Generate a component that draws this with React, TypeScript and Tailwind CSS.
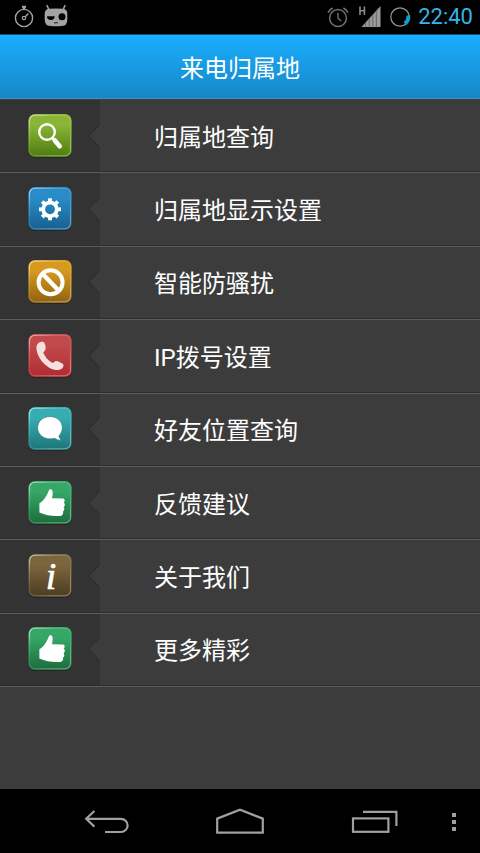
import type { ReactNode } from 'react';

const menuItems: { label: string; icon: ReactNode }[] = [
  { label: '归属地查询', icon: <SearchIcon /> },
  { label: '归属地显示设置', icon: <SettingsIcon /> },
  { label: '智能防骚扰', icon: <BlockIcon /> },
  { label: 'IP拨号设置', icon: <PhoneIcon /> },
  { label: '好友位置查询', icon: <ChatIcon /> },
  { label: '反馈建议', icon: <ThumbIcon id="feedback" /> },
  { label: '关于我们', icon: <InfoIcon /> },
  { label: '更多精彩', icon: <ThumbIcon id="more" /> },
];

type TileProps = { id: string; from: string; to: string; children: ReactNode };

// Glossy rounded tile shared by all the menu icons
function Tile({ id, from, to, children }: TileProps) {
  return (
    <svg width="44" height="44" viewBox="0 0 44 44" aria-hidden="true">
      <defs>
        <linearGradient id={`${id}-fill`} x1="0" y1="0" x2="0" y2="1">
          <stop offset="0.25" stopColor={from} />
          <stop offset="1" stopColor={to} />
        </linearGradient>
        <linearGradient id={`${id}-rim`} x1="0" y1="0" x2="0.6" y2="1">
          <stop offset="0" stopColor="#fff" stopOpacity="0.7" />
          <stop offset="0.25" stopColor="#fff" stopOpacity="0.25" />
          <stop offset="0.6" stopColor="#fff" stopOpacity="0.08" />
          <stop offset="1" stopColor="#fff" stopOpacity="0.35" />
        </linearGradient>
      </defs>
      <rect x="0" y="0.5" width="44" height="43.5" rx="7" fill="#222" fillOpacity="0.7" />
      <rect x="0.3" y="0" width="43.4" height="43" rx="6.5" fill={`url(#${id}-fill)`} />
      <rect x="1.5" y="1.2" width="41" height="40.6" rx="5.6" fill="none" stroke={`url(#${id}-rim)`} strokeWidth="1.1" />
      {children}
    </svg>
  );
}

function SearchIcon() {
  return (
    <Tile id="search" from="#8ab536" to="#4d7c10">
      <circle cx="19" cy="18" r="7.8" fill="none" stroke="#fff" strokeWidth="2.4" />
      <path d="M24 23.5 L26.5 26" stroke="#fff" strokeWidth="3" />
      <path d="M26.8 26.5 L31.7 32.2" stroke="#fff" strokeWidth="4.6" strokeLinecap="round" />
    </Tile>
  );
}

function SettingsIcon() {
  const teeth = [0, 45, 90, 135, 180, 225, 270, 315];
  return (
    <Tile id="settings" from="#2a8cc8" to="#185f8e">
      <circle cx="22" cy="22.3" r="6.8" fill="none" stroke="#fff" strokeWidth="3.8" />
      {teeth.map((angle) => (
        <rect key={angle} x="20.1" y="11.3" width="3.8" height="4" fill="#fff" transform={`rotate(${angle} 22 22.3)`} />
      ))}
    </Tile>
  );
}

function BlockIcon() {
  return (
    <Tile id="block" from="#d69a20" to="#8f6210">
      <circle cx="22.6" cy="22.3" r="12" fill="none" stroke="#fff" strokeWidth="4" />
      <path d="M14.5 13.8 L30.8 30.8" stroke="#fff" strokeWidth="4.4" />
    </Tile>
  );
}

function PhoneIcon() {
  return (
    <Tile id="phone" from="#c24a4c" to="#b02c30">
      <path
        d="M13.2 7.8 C15.4 7.2 16.7 8.3 17.2 11 C17.8 14 18 15.4 16.6 16.9 L15.2 18.5 C17.2 23.2 20.2 26.7 24.6 29 L27 27.4 C28.2 26.6 29.4 26.8 31 27.8 C33.6 29.2 35.6 29.6 35.5 31.4 C35.2 34.5 31.5 36.6 27.6 36 C18 34.4 8.8 23.5 8.4 14 C8.3 10.8 10 8.6 13.2 7.8 Z"
        fill="#f5dede"
      />
    </Tile>
  );
}

function ChatIcon() {
  return (
    <Tile id="chat" from="#36adb3" to="#1d7478">
      <path
        d="M22 9.6 C29 9.6 34.3 14.2 34.3 20.6 C34.3 24 33 26.8 31 28.8 C31.2 30.4 31.9 31.8 33.2 33.2 C30.8 33.3 28.4 32.6 26.6 31.2 C25.2 31.7 23.7 31.9 22 31.9 C15 31.9 9.6 27.2 9.6 20.8 C9.6 14.3 15 9.6 22 9.6 Z"
        fill="#fff"
        stroke="#1f6d70"
        strokeWidth="0.6"
      />
    </Tile>
  );
}

function ThumbIcon({ id }: { id: string }) {
  return (
    <Tile id={id} from="#36a766" to="#1c6c3c">
      <path
        d="M20.8 9.4 C21.6 7.6 24 7.9 24.4 9.8 C24.9 12 24.6 14.4 24 17.2 L35.2 17.4 C36.9 17.6 37.1 20.4 35.8 21.5 C37.3 22.5 37 25.4 35.6 26.2 C36.8 27.4 36.4 30 34.9 30.6 C35.7 32.4 34.6 34.7 32.6 34.9 C25.6 35.4 17.8 34.8 11.4 31.6 L11.4 22.2 C15.8 19.7 19 14.4 20.8 9.4 Z"
        fill="#fff"
      />
    </Tile>
  );
}

function InfoIcon() {
  return (
    <Tile id="info" from="#7c663e" to="#4b3b20">
      <text
        x="23"
        y="34.5"
        textAnchor="middle"
        fill="#fff"
        stroke="#fff"
        strokeWidth="0.6"
        className="font-['Liberation_Serif',serif] text-[38px] italic"
      >
        i
      </text>
    </Tile>
  );
}

function StatusBar() {
  return (
    <div className="flex h-[34px] items-center justify-between bg-black pl-[14px] pr-[7px]">
      <div className="flex items-center gap-[10px]">
        <svg width="20" height="24" viewBox="0 0 20 24" fill="none" stroke="#a3a3a3" aria-hidden="true">
          <circle cx="10" cy="13" r="8.6" strokeWidth="1.4" />
          <path d="M8 1.8 H12" strokeWidth="2" />
          <path d="M10 2 V4" strokeWidth="2.4" />
          <path d="M11.2 11.8 L14.4 8.4" strokeWidth="1.4" />
          <circle cx="10" cy="13" r="1.7" strokeWidth="1.2" />
        </svg>
        <svg width="24" height="24" viewBox="0 0 24 24" aria-hidden="true">
          <path d="M3 0.4 L5 5 M21 0.4 L19 5" stroke="#a3a3a3" strokeWidth="1.5" strokeLinecap="round" />
          <path d="M5 3.8 Q12 3.2 19 3.8 Q23.3 4.4 23.3 8.6 V15 Q23.3 20.4 18 21 Q12 21.6 6 21 Q0.8 20.4 0.7 15 V8.6 Q0.8 4.4 5 3.8 Z" fill="#a3a3a3" />
          <path d="M3 11.2 H10.6 A3.8 3.8 0 0 1 3 11.2 Z" fill="#000" />
          <circle cx="18" cy="11.8" r="3.5" fill="#000" />
          <path d="M10 17.6 L11.4 18 L12.2 17.6 L13.8 18" stroke="#000" strokeWidth="0.9" fill="none" />
        </svg>
      </div>
      <div className="flex items-center gap-[7px]">
        <svg width="22" height="22" viewBox="0 0 22 22" fill="none" stroke="#6f6f6f" className="mr-[3px]" aria-hidden="true">
          <circle cx="11" cy="12" r="8.4" strokeWidth="1.5" />
          <path d="M1 6.6 A11 11 0 0 1 5.6 2 M16.4 2 A11 11 0 0 1 21 6.6" strokeWidth="1.8" />
          <path d="M11 7 V12.4 L14.4 15" strokeWidth="1.4" />
        </svg>
        <svg width="22" height="24" viewBox="0 0 22 24" aria-hidden="true">
          <path d="M1 1.5 V10 M5.4 1.5 V10 M1 5.7 H5.4" stroke="#8a8a8a" strokeWidth="1.6" />
          <path d="M2.5 22 L21.5 1 V22 Z" fill="#9a9a9a" />
          <path d="M6.6 17.5 V22.5 M10.2 13.5 V22.5 M13.8 9.5 V22.5 M17.4 5.5 V22.5" stroke="#5a5a5a" strokeWidth="0.8" />
        </svg>
        <svg width="22" height="22" viewBox="0 0 22 22" fill="none" className="ml-px" aria-hidden="true">
          <circle cx="11" cy="11" r="9.2" stroke="#9a9a9a" strokeWidth="1.2" />
          <path d="M19.2 9.4 A8.4 8.4 0 0 1 15.8 17.6" stroke="#0f9fd0" strokeWidth="3.8" />
        </svg>
        <time className="font-[Roboto,sans-serif] text-[22px] leading-6 text-[#33b5e5]">22:40</time>
      </div>
    </div>
  );
}

function NavBar() {
  return (
    <nav className="flex h-16 bg-black pt-[2px] pl-10">
      <button type="button" aria-label="Back" className="flex flex-1 items-center justify-center">
        <svg width="46" height="26" viewBox="0 0 46 26" fill="none" stroke="#a0a0a0" strokeWidth="2.2">
          <path d="M2 9.8 H37 A6.6 6.6 0 0 1 37 23 H21" />
          <path d="M10.4 2 L2.2 9.8 L10.4 17.6" />
        </svg>
      </button>
      <button type="button" aria-label="Home" className="flex flex-1 items-center justify-center">
        <svg width="48" height="28" viewBox="0 0 48 28" fill="none" stroke="#a0a0a0" strokeWidth="2.2">
          <path d="M1.2 10.6 L24 1.8 L46.8 10.6 V24.6 H1.2 Z" />
        </svg>
      </button>
      <button type="button" aria-label="Recent apps" className="flex flex-1 items-center justify-center">
        <svg width="50" height="26" viewBox="0 0 50 26" fill="none" stroke="#a0a0a0" strokeWidth="2.2">
          <rect x="5" y="9.4" width="35.4" height="13.4" />
          <path d="M15 2.8 H48.4 V17" />
        </svg>
      </button>
      <button type="button" aria-label="Menu" className="flex w-10 flex-col items-start justify-center gap-[3px] pl-3">
        <span className="size-1 bg-[#a0a0a0]" />
        <span className="size-1 bg-[#a0a0a0]" />
        <span className="size-1 bg-[#a0a0a0]" />
      </button>
    </nav>
  );
}

const App = () => {
  return (
    <div className="flex min-h-screen flex-col bg-[#3c3c3c] font-[Roboto,'Noto_Sans_CJK_SC',sans-serif] text-white">
      <StatusBar />
      <header className="flex h-[65px] items-center justify-center border-t border-b border-t-[#17506f] border-b-[#3a94c4] bg-linear-to-b from-[#1aaeff] to-[#1787c6] pt-1">
        <h1 className="text-2xl">来电归属地</h1>
      </header>

      <main className="flex flex-1 flex-col bg-[repeating-conic-gradient(#3a3a3a_0_25%,#3e3e3e_0_50%)] bg-[length:4px_4px] pt-px pb-[102px]">
        <ul className="grid flex-1 auto-rows-fr">
          {menuItems.map((item) => (
            <li key={item.label} className="border-b border-[#5c5c5c]">
              <button type="button" className="flex h-full w-full items-stretch border-b border-[#2e2e2e] text-left">
                <span className="flex w-[100px] shrink-0 items-center justify-between bg-[#333333] pl-7">
                  {item.icon}
                  <svg width="12" height="26" viewBox="0 0 12 26" aria-hidden="true">
                    <path d="M12 1 L0.8 13 L12 25 Z" fill="#3c3c3c" />
                    <path d="M12 1 L0.8 13 L12 25" fill="none" stroke="#2b2b2b" strokeWidth="1" />
                  </svg>
                </span>
                <span className="flex items-center pt-1 pl-[54px] text-2xl">{item.label}</span>
              </button>
            </li>
          ))}
        </ul>
      </main>

      <NavBar />
    </div>
  );
};

export default App;
